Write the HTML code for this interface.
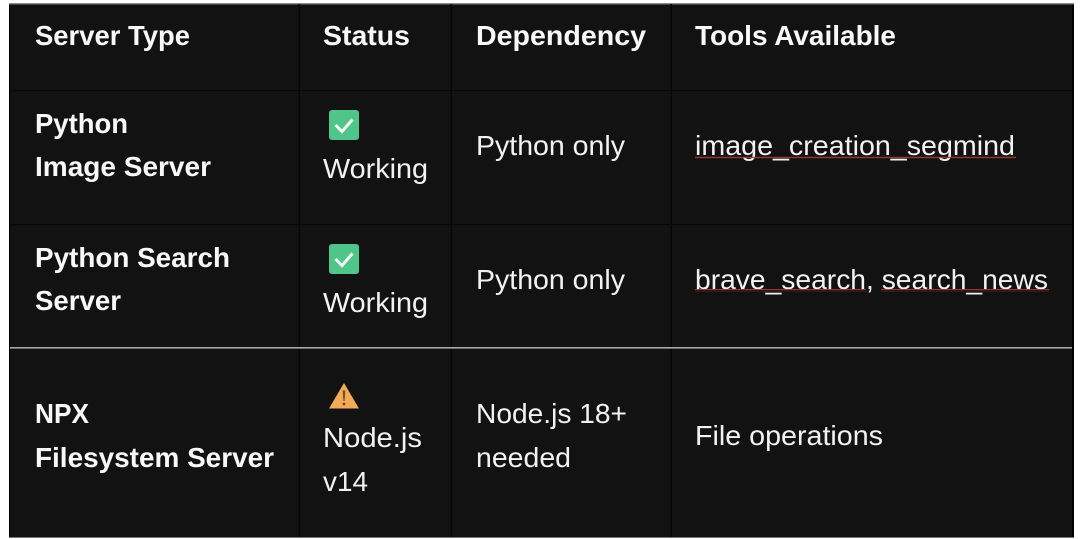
<!DOCTYPE html>
<html>
<head>
<meta charset="utf-8">
<style>
html,body{margin:0;padding:0;background:#fff;width:1080px;height:539px;overflow:hidden}
svg{display:block}
text{font-family:"Liberation Sans",sans-serif;font-size:27.5px;fill:#f2f2f2}
.b{font-weight:700;fill:#f8f8f8}
.s{filter:blur(0.35px)}
</style>
</head>
<body>
<svg width="1080" height="539" viewBox="0 0 1080 539" xmlns="http://www.w3.org/2000/svg">
<defs>
<pattern id="sq" width="4" height="3" patternUnits="userSpaceOnUse">
<path d="M0 2 L1 1 L2 2 L3 1 L4 2" fill="none" stroke="#a83a3a" stroke-width="0.9"/>
</pattern>
</defs>
<rect x="9" y="3" width="1065" height="535" fill="#000"/>
<rect x="9" y="3" width="1065" height="1.5" fill="#8a8a8a"/>
<rect x="10" y="5" width="1062" height="532" fill="#121212"/>
<rect x="9" y="537" width="1065" height="1" fill="#777"/>
<!-- grid -->
<g fill="#060606">
<rect x="298.500" y="4" width="1.500" height="533"/>
<rect x="450.500" y="4" width="1.500" height="533"/>
<rect x="670.500" y="4" width="1.500" height="533"/>
<rect x="10" y="90" width="1062" height="1"/>
<rect x="10" y="224" width="1062" height="1"/>
</g>
<rect x="10" y="347" width="1062" height="1.600" fill="#a8a8a8"/>
<g class="s">
<!-- header -->
<text class="b" x="35" y="45" textLength="155" lengthAdjust="spacingAndGlyphs">Server Type</text>
<text class="b" x="323" y="45" textLength="87" lengthAdjust="spacingAndGlyphs">Status</text>
<text class="b" x="476" y="45" textLength="170" lengthAdjust="spacingAndGlyphs">Dependency</text>
<text class="b" x="695" y="45" textLength="201" lengthAdjust="spacingAndGlyphs">Tools Available</text>
<!-- row 1 -->
<text class="b" x="35" y="133" textLength="93" lengthAdjust="spacingAndGlyphs">Python</text>
<text class="b" x="35" y="176" textLength="176" lengthAdjust="spacingAndGlyphs">Image Server</text>
<rect x="329" y="110" width="30" height="30" rx="3" fill="#4fc58a"/>
<path d="M335.500 125 L342 131.500 L352.500 119.500" fill="none" stroke="#f1fbf5" stroke-width="3"/>
<text x="323" y="178" textLength="105" lengthAdjust="spacingAndGlyphs">Working</text>
<text x="476" y="155" textLength="149" lengthAdjust="spacingAndGlyphs">Python only</text>
<text x="695" y="155" textLength="320" lengthAdjust="spacingAndGlyphs">image_creation_segmind</text>
<rect x="695" y="155.500" width="321" height="3" fill="url(#sq)"/>
<!-- row 2 -->
<text class="b" x="35" y="267" textLength="195" lengthAdjust="spacingAndGlyphs">Python Search</text>
<text class="b" x="35" y="310" textLength="86" lengthAdjust="spacingAndGlyphs">Server</text>
<rect x="329" y="244" width="30" height="30" rx="3" fill="#4fc58a"/>
<path d="M335.500 259 L342 265.500 L352.500 253.500" fill="none" stroke="#f1fbf5" stroke-width="3"/>
<text x="323" y="312" textLength="105" lengthAdjust="spacingAndGlyphs">Working</text>
<text x="476" y="289" textLength="149" lengthAdjust="spacingAndGlyphs">Python only</text>
<text x="695" y="289" textLength="353" lengthAdjust="spacingAndGlyphs">brave_search, search_news</text>
<rect x="695" y="289" width="171" height="3" fill="url(#sq)"/>
<rect x="881" y="289" width="168" height="3" fill="url(#sq)"/>
<!-- row 3 -->
<text class="b" x="35" y="423" textLength="54" lengthAdjust="spacingAndGlyphs">NPX</text>
<text class="b" x="35" y="467" textLength="239" lengthAdjust="spacingAndGlyphs">Filesystem Server</text>
<path d="M344 383 L359 408.500 L329 408.500 Z" fill="#f3ab59"/>
<path d="M342.700 390.500 L345.300 390.500 L344.600 401 L343.400 401 Z" fill="#6e4a26"/>
<circle cx="344" cy="404" r="1.400" fill="#6e4a26"/>
<text x="323" y="447" textLength="99" lengthAdjust="spacingAndGlyphs">Node.js</text>
<text x="323" y="491" textLength="45" lengthAdjust="spacingAndGlyphs">v14</text>
<text x="476" y="423" textLength="151" lengthAdjust="spacingAndGlyphs">Node.js 18+</text>
<text x="476" y="467" textLength="95" lengthAdjust="spacingAndGlyphs">needed</text>
<text x="695" y="445" textLength="188" lengthAdjust="spacingAndGlyphs">File operations</text>
</g>
</svg>
</body>
</html>
